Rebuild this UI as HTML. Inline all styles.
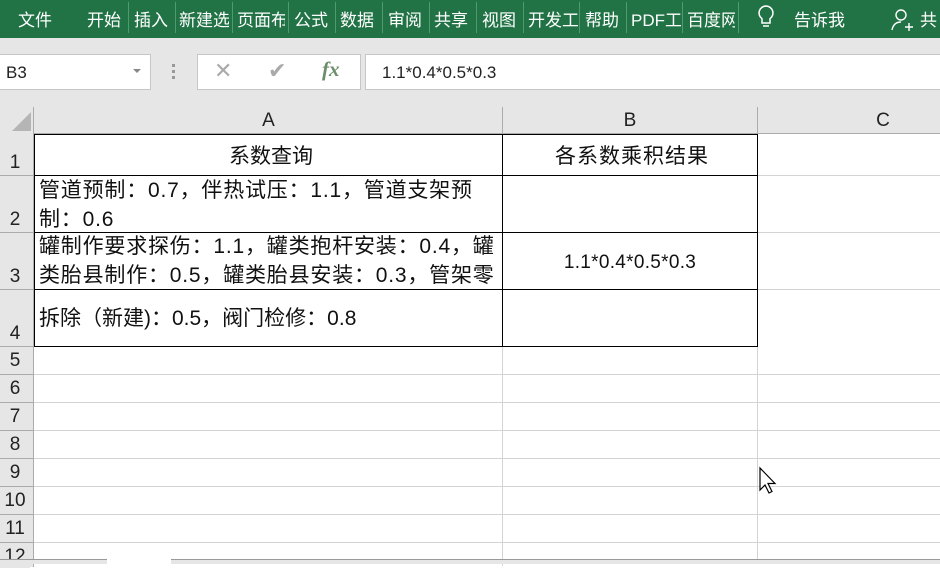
<!DOCTYPE html>
<html><head><meta charset="utf-8"><style>
*{margin:0;padding:0;box-sizing:border-box}
body{width:940px;height:564px;overflow:hidden;background:#fff;font-family:"Liberation Sans","Noto Sans CJK SC",sans-serif;position:relative}
.abs{position:absolute}
#rib{left:0;top:0;width:940px;height:38px;background:#217346;color:#fff;font-size:17px}
#rib span{position:absolute;top:6px;white-space:nowrap;overflow:hidden}
.sep{position:absolute;top:2px;width:1px;height:31px;background:#4f9a6f}
#fb{left:0;top:38px;width:940px;height:69px;background:#e6e6e6}
.box{position:absolute;background:#fff;border:1px solid #c6c6c6}
.hdr{background:#e6e6e6;color:#222;font-size:19px;text-align:center}
.gl{position:absolute;background:#d4d4d4}
.cell{position:absolute;font-size:21px;line-height:29px;color:#111;letter-spacing:0.8px;white-space:nowrap}
</style></head><body>
<div id="rib" class="abs">
<span style="left:18px">文件</span>
<span style="left:87px">开始</span><div class="sep" style="left:128px"></div>
<span style="left:134px">插入</span><div class="sep" style="left:175px"></div>
<span style="left:179px;width:50px">新建选</span><div class="sep" style="left:232px"></div>
<span style="left:237px;width:48px">页面布</span><div class="sep" style="left:288px"></div>
<span style="left:294px">公式</span><div class="sep" style="left:335px"></div>
<span style="left:340px">数据</span><div class="sep" style="left:382px"></div>
<span style="left:388px">审阅</span><div class="sep" style="left:429px"></div>
<span style="left:434px">共享</span><div class="sep" style="left:476px"></div>
<span style="left:482px">视图</span><div class="sep" style="left:523px"></div>
<span style="left:528px;width:50px">开发工</span><div class="sep" style="left:579px"></div>
<span style="left:585px">帮助</span><div class="sep" style="left:626px"></div>
<span style="left:631px;width:50px">PDF工</span><div class="sep" style="left:682px"></div>
<span style="left:687px;width:48px">百度网</span><div class="sep" style="left:738px"></div>
<svg class="abs" style="left:756px;top:4px" width="20" height="26" viewBox="0 0 20 26"><path d="M10 2a7 7 0 0 0-4 12.7V19h8v-4.3A7 7 0 0 0 10 2z M7 22h6" fill="none" stroke="#fff" stroke-width="1.5"/></svg>
<span style="left:794px">告诉我</span>
<svg class="abs" style="left:890px;top:8px" width="24" height="24" viewBox="0 0 24 24"><circle cx="11" cy="7" r="5" fill="none" stroke="#fff" stroke-width="1.4"/><path d="M2 22c1-5 4-8 9-8M15 19h8M19 15v8" fill="none" stroke="#fff" stroke-width="1.4"/></svg>
<span style="left:920px">共</span>
</div>
<div id="fb" class="abs">
<div class="box" style="left:-1px;top:16px;width:152px;height:36px;font-size:17px;padding:8px 6px;color:#222">B3<span style="position:absolute;right:9px;top:14px;border:4px solid transparent;border-top:4px solid #888"></span></div>
<div class="abs" style="left:172px;top:26px;width:3px;height:3px;background:#999;box-shadow:0 6px #999,0 12px #999"></div>
<div class="box" style="left:197px;top:16px;width:164px;height:36px"></div>
<div class="abs" style="left:214px;top:20px;color:#aaa;font-size:22px">✕</div>
<div class="abs" style="left:268px;top:20px;color:#aaa;font-size:22px">✔</div>
<div class="abs" style="left:322px;top:19px;color:#6b8f6b;font-size:21px;font-style:italic;font-family:'Liberation Serif',serif;font-weight:bold">fx</div>
<div class="box" style="left:365px;top:16px;width:580px;height:36px;font-size:17px;padding:8px 16px;color:#222">1.1*0.4*0.5*0.3</div>
</div>
<div class="abs hdr" style="left:0;top:107px;width:940px;height:27px;border-bottom:1px solid #ababab"></div>
<div class="abs hdr" style="left:0;top:107px;width:34px;height:460px;border-right:1px solid #ababab"></div>
<svg class="abs" style="left:10px;top:112px" width="22" height="20"><path d="M21 0V19H2z" fill="#b5b5b5"/></svg>
<div class="abs hdr" style="left:35px;top:110px;width:467px">A</div>
<div class="abs" style="left:502px;top:107px;width:1px;height:27px;background:#ababab"></div>
<div class="abs hdr" style="left:503px;top:110px;width:254px">B</div>
<div class="abs" style="left:757px;top:107px;width:1px;height:27px;background:#ababab"></div>
<div class="abs hdr" style="left:758px;top:110px;width:250px">C</div>
<div class="abs hdr" style="left:0;top:152px;width:30px">1</div>
<div class="abs hdr" style="left:0;top:209px;width:30px">2</div>
<div class="abs hdr" style="left:0;top:266px;width:30px">3</div>
<div class="abs hdr" style="left:0;top:323px;width:30px">4</div>
<div class="abs hdr" style="left:0;top:350px;width:30px">5</div>
<div class="abs hdr" style="left:0;top:378px;width:30px">6</div>
<div class="abs hdr" style="left:0;top:406px;width:30px">7</div>
<div class="abs hdr" style="left:0;top:434px;width:30px">8</div>
<div class="abs hdr" style="left:0;top:462px;width:30px">9</div>
<div class="abs hdr" style="left:0;top:490px;width:30px">10</div>
<div class="abs hdr" style="left:0;top:518px;width:30px">11</div>
<div class="abs hdr" style="left:0;top:546px;width:30px">12</div>
<div class="gl" style="left:0;top:175px;width:34px;height:1px;background:#ababab"></div>
<div class="gl" style="left:0;top:232px;width:34px;height:1px;background:#ababab"></div>
<div class="gl" style="left:0;top:289px;width:34px;height:1px;background:#ababab"></div>
<div class="gl" style="left:0;top:346px;width:34px;height:1px;background:#ababab"></div>
<div class="gl" style="left:757px;top:134px;width:1px;height:430px"></div>
<div class="gl" style="left:502px;top:346px;width:1px;height:220px"></div>
<div class="gl" style="left:757px;top:175px;width:183px;height:1px"></div>
<div class="gl" style="left:757px;top:232px;width:183px;height:1px"></div>
<div class="gl" style="left:757px;top:289px;width:183px;height:1px"></div>
<div class="gl" style="left:34px;top:374px;width:906px;height:1px"></div>
<div class="gl" style="left:34px;top:402px;width:906px;height:1px"></div>
<div class="gl" style="left:34px;top:430px;width:906px;height:1px"></div>
<div class="gl" style="left:34px;top:458px;width:906px;height:1px"></div>
<div class="gl" style="left:34px;top:486px;width:906px;height:1px"></div>
<div class="gl" style="left:34px;top:514px;width:906px;height:1px"></div>
<div class="gl" style="left:34px;top:542px;width:906px;height:1px"></div>
<div class="gl" style="left:0;top:374px;width:34px;height:1px;background:#ababab"></div>
<div class="gl" style="left:0;top:402px;width:34px;height:1px;background:#ababab"></div>
<div class="gl" style="left:0;top:430px;width:34px;height:1px;background:#ababab"></div>
<div class="gl" style="left:0;top:458px;width:34px;height:1px;background:#ababab"></div>
<div class="gl" style="left:0;top:486px;width:34px;height:1px;background:#ababab"></div>
<div class="gl" style="left:0;top:514px;width:34px;height:1px;background:#ababab"></div>
<div class="gl" style="left:0;top:542px;width:34px;height:1px;background:#ababab"></div>
<div class="abs" style="left:34px;top:134px;width:724px;height:213px;border:1px solid #000"></div>
<div class="abs" style="left:502px;top:134px;width:1px;height:212px;background:#000"></div>
<div class="abs" style="left:34px;top:175px;width:724px;height:1px;background:#000"></div>
<div class="abs" style="left:34px;top:232px;width:724px;height:1px;background:#000"></div>
<div class="abs" style="left:34px;top:289px;width:724px;height:1px;background:#000"></div>
<div class="cell" style="left:35px;top:142px;width:472px;text-align:center;letter-spacing:0">系数查询</div>
<div class="cell" style="left:503px;top:142px;width:258px;text-align:center;letter-spacing:1px">各系数乘积结果</div>
<div class="cell" style="left:39px;top:176px">管道预制：0.7，伴热试压：1.1，管道支架预<br>制：0.6</div>
<div class="abs" style="left:36px;top:233px;width:466px;height:56px;overflow:hidden"><div class="cell" style="left:3px;top:-1px">罐制作要求探伤：1.1，罐类抱杆安装：0.4，罐<br>类胎县制作：0.5，罐类胎县安装：0.3，管架零</div></div>
<div class="cell" style="left:503px;top:248px;width:254px;text-align:center;font-size:19px;letter-spacing:0.3px">1.1*0.4*0.5*0.3</div>
<div class="cell" style="left:39px;top:304px;letter-spacing:0">拆除（新建)：0.5，阀门检修：0.8</div>
<div class="abs" style="left:0;top:559px;width:940px;height:5px;background:#e6e6e6;border-top:1px solid #999"></div>
<div class="abs" style="left:107px;top:559px;width:64px;height:5px;background:#fff"></div>
<svg class="abs" style="left:758px;top:466px" width="20" height="30"><path d="M2 2v22l5-5 4 8 3-1.5-4-8h7z" fill="#fff" stroke="#000" stroke-width="1.2"/></svg>
</body></html>
